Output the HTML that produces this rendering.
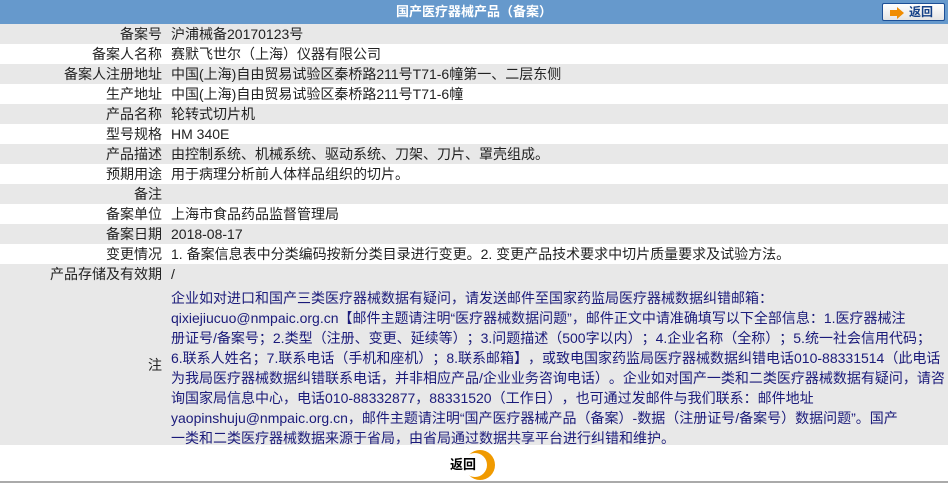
<!DOCTYPE html>
<html><head><meta charset="utf-8"><style>
*{margin:0;padding:0;box-sizing:border-box}
body{width:948px;height:485px;background:#fff;font-family:"Liberation Sans","Noto Sans CJK SC",sans-serif;font-size:14px;color:#222;position:relative;overflow:hidden;text-spacing-trim:space-all}
.hd{position:absolute;left:0;top:0;width:948px;height:24px;background:#6699cc;color:#fff;font-weight:bold;text-align:center;line-height:24px;font-size:13px}
.btn{position:absolute;left:882px;top:3px;width:63px;height:18px;border:1px solid #1c4f96;border-radius:2px;background:linear-gradient(#fff,#e4e4e4);color:#123f86;font-weight:bold;font-size:12px;line-height:16px}
.btn svg{position:absolute;left:7px;top:3px}
.btn span{position:absolute;left:26px;top:0}
.row{position:absolute;left:0;width:948px;height:20px;line-height:20px}
.g{background:#e8e8e8}
.l{position:absolute;left:0;width:162px;text-align:right}
.v{position:absolute;left:171px;white-space:nowrap}
.notes{position:absolute;left:0;top:284px;width:948px;height:161px;background:#e8e8e8}
.notes .l{top:71px}
.notes .t{position:absolute;left:171px;top:4px;color:#1a1a7a;line-height:20px;white-space:nowrap}
.bl{position:absolute;left:0;top:481px;width:948px;height:2px;background:#aaa}
.b2{position:absolute;left:450px;top:454px;font-weight:bold;font-size:13px;color:#000}
</style></head><body>
<div class="hd">国产医疗器械产品（备案）</div>
<div class="btn"><svg width="16" height="12"><polygon points="0,3 7,3 7,0 14,6 7,12 7,9 0,9" fill="#f08c00"/></svg><span>返回</span></div>
<div class="row g" style="top:24px"><span class="l">备案号</span><span class="v">沪浦械备20170123号</span></div>
<div class="row" style="top:44px"><span class="l">备案人名称</span><span class="v">赛默飞世尔（上海）仪器有限公司</span></div>
<div class="row g" style="top:64px"><span class="l">备案人注册地址</span><span class="v">中国(上海)自由贸易试验区秦桥路211号T71-6幢第一、二层东侧</span></div>
<div class="row" style="top:84px"><span class="l">生产地址</span><span class="v">中国(上海)自由贸易试验区秦桥路211号T71-6幢</span></div>
<div class="row g" style="top:104px"><span class="l">产品名称</span><span class="v">轮转式切片机</span></div>
<div class="row" style="top:124px"><span class="l">型号规格</span><span class="v">HM 340E</span></div>
<div class="row g" style="top:144px"><span class="l">产品描述</span><span class="v">由控制系统、机械系统、驱动系统、刀架、刀片、罩壳组成。</span></div>
<div class="row" style="top:164px"><span class="l">预期用途</span><span class="v">用于病理分析前人体样品组织的切片。</span></div>
<div class="row g" style="top:184px"><span class="l">备注</span><span class="v"></span></div>
<div class="row" style="top:204px"><span class="l">备案单位</span><span class="v">上海市食品药品监督管理局</span></div>
<div class="row g" style="top:224px"><span class="l">备案日期</span><span class="v">2018-08-17</span></div>
<div class="row" style="top:244px"><span class="l">变更情况</span><span class="v">1. 备案信息表中分类编码按新分类目录进行变更。2. 变更产品技术要求中切片质量要求及试验方法。</span></div>
<div class="row g" style="top:264px"><span class="l">产品存储及有效期</span><span class="v">/</span></div>
<div class="notes"><span class="l">注</span><div class="t">企业如对进口和国产三类医疗器械数据有疑问，请发送邮件至国家药监局医疗器械数据纠错邮箱：<br>qixiejiucuo@nmpaic.org.cn【邮件主题请注明“医疗器械数据问题”，邮件正文中请准确填写以下全部信息：1.医疗器械注<br>册证号/备案号；2.类型（注册、变更、延续等）；3.问题描述（500字以内）；4.企业名称（全称）；5.统一社会信用代码；<br>6.联系人姓名；7.联系电话（手机和座机）；8.联系邮箱】，或致电国家药监局医疗器械数据纠错电话010-88331514（此电话<br>为我局医疗器械数据纠错联系电话，并非相应产品/企业业务咨询电话）。企业如对国产一类和二类医疗器械数据有疑问，请咨<br>询国家局信息中心，电话010-88332877，88331520（工作日），也可通过发邮件与我们联系：邮件地址<br>yaopinshuju@nmpaic.org.cn，邮件主题请注明“国产医疗器械产品（备案）-数据（注册证号/备案号）数据问题”。国产<br>一类和二类医疗器械数据来源于省局，由省局通过数据共享平台进行纠错和维护。</div></div>
<svg style="position:absolute;left:458px;top:449px" width="40" height="32"><circle cx="22" cy="16" r="15" fill="#f09a00"/><circle cx="17" cy="16" r="12" fill="#fff"/></svg>
<div class="b2">返回</div>
<div class="bl"></div>
</body></html>
